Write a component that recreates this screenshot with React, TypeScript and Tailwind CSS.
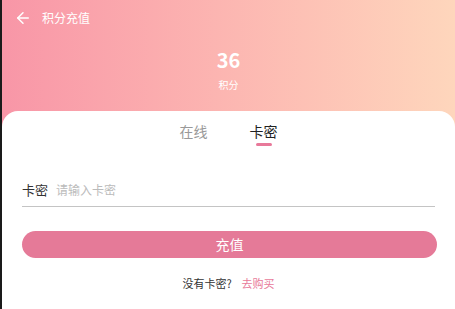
import { ArrowLeft } from "lucide-react";

const App = () => {
  return (
    <div
      className="w-[455px] h-[309px] overflow-hidden border-l-2 border-[#1a1a1a] bg-white flex flex-col"
      style={{ fontFamily: '"Noto Sans CJK SC", "Noto Sans", sans-serif' }}
    >
      {/* Header */}
      <div className="relative h-[127px] shrink-0 bg-gradient-to-r from-[#f896a7] to-[#fed6bc]">
        <div className="flex items-center h-[36px] pl-[12px] gap-[10px] text-white">
          <ArrowLeft className="size-[18px]" strokeWidth={2} />
          <span className="text-[12px] leading-none">积分充值</span>
        </div>
        <div className="flex flex-col items-center text-white mt-[14px]">
          <span className="text-[20px] font-bold leading-none">36</span>
          <span className="text-[10px] leading-none mt-[10px]">积分</span>
        </div>
      </div>

      {/* Card */}
      <div className="-mt-[16px] flex-1 bg-white rounded-t-[16px] relative">
        {/* Tabs */}
        <div className="flex justify-center gap-[42px] pt-[10px]">
          <div className="flex flex-col items-center">
            <span className="text-[14px] leading-[20px] text-[#999]">在线</span>
          </div>
          <div className="flex flex-col items-center">
            <span className="text-[14px] leading-[20px] text-[#222]">卡密</span>
            <span className="mt-[2px] w-[16px] h-[3px] rounded-full bg-[#e8799a]" />
          </div>
        </div>

        {/* Input */}
        <div className="mx-[20px] mt-[30px] flex items-center h-[31px] pb-[2px] border-b border-[#c4c4c4]">
          <span className="text-[13px] text-[#333]">卡密</span>
          <span className="ml-[8px] text-[12px] text-[#bbb]">请输入卡密</span>
        </div>

        {/* Button */}
        <button className="mx-[20px] mt-[24px] w-[415px] h-[27px] rounded-full bg-[#e57a98] text-white text-[14px] flex items-center justify-center">
          充值
        </button>

        {/* Footer */}
        <div className="mt-[17px] flex justify-center items-center text-[11px] leading-[16px]">
          <span className="text-[#333]">没有卡密?</span>
          <span className="ml-[10px] text-[#e8799a]">去购买</span>
        </div>
      </div>
    </div>
  );
};

export default App;
